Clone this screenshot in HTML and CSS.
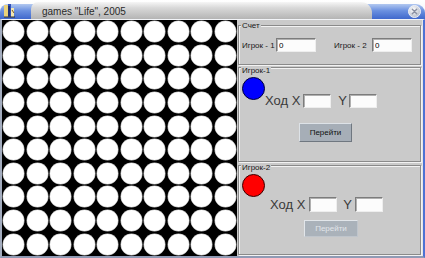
FILE: index.html
```html
<!DOCTYPE html>
<html lang="ru">
<head>
<meta charset="utf-8">
<title>games "Life", 2005</title>
<link rel="stylesheet" href="styles.css">
</head>
<body>
<div class="window">
  <div class="titlebar">
    <div class="bluebar">
      <div class="tb-left">
        <svg class="app-icon" width="13" height="15" viewBox="0 0 13 15">
          <rect x="1" y="2" width="4" height="12" fill="#e9d27a"/>
          <rect x="5" y="1" width="3" height="13" fill="#2f4fb8"/>
          <rect x="8" y="5" width="3" height="9" fill="#f3e7b0"/>
          <path d="M6 3 L6 13" stroke="#101840" stroke-width="1"/>
          <path d="M1 14 L12 14" stroke="#303030" stroke-width="1"/>
          <path d="M9 7 L11 10" stroke="#7a5a20" stroke-width="1"/>
        </svg>
      </div>
      <div class="tb-tab"><span class="title">games "Life", 2005</span></div>
      <div class="tb-right">
        <span class="close">
          <svg width="13" height="13" viewBox="0 0 13 13">
            <defs>
              <radialGradient id="cg" cx="40%" cy="35%" r="65%">
                <stop offset="0" stop-color="#ffffff"/>
                <stop offset="1" stop-color="#b9bfcc"/>
              </radialGradient>
            </defs>
            <circle cx="6.5" cy="6.5" r="6" fill="url(#cg)" stroke="#eef1f7" stroke-width="1"/>
            <path d="M4.3 4.3 L8.7 8.7 M8.7 4.3 L4.3 8.7" stroke="#8a90a2" stroke-width="1.4" stroke-linecap="round"/>
          </svg>
        </span>
      </div>
    </div>
  </div>
  <div class="body">
    <div class="board">
      <span class="cell"></span><span class="cell"></span><span class="cell"></span><span class="cell"></span><span class="cell"></span><span class="cell"></span><span class="cell"></span><span class="cell"></span><span class="cell"></span><span class="cell"></span>
      <span class="cell"></span><span class="cell"></span><span class="cell"></span><span class="cell"></span><span class="cell"></span><span class="cell"></span><span class="cell"></span><span class="cell"></span><span class="cell"></span><span class="cell"></span>
      <span class="cell"></span><span class="cell"></span><span class="cell"></span><span class="cell"></span><span class="cell"></span><span class="cell"></span><span class="cell"></span><span class="cell"></span><span class="cell"></span><span class="cell"></span>
      <span class="cell"></span><span class="cell"></span><span class="cell"></span><span class="cell"></span><span class="cell"></span><span class="cell"></span><span class="cell"></span><span class="cell"></span><span class="cell"></span><span class="cell"></span>
      <span class="cell"></span><span class="cell"></span><span class="cell"></span><span class="cell"></span><span class="cell"></span><span class="cell"></span><span class="cell"></span><span class="cell"></span><span class="cell"></span><span class="cell"></span>
      <span class="cell"></span><span class="cell"></span><span class="cell"></span><span class="cell"></span><span class="cell"></span><span class="cell"></span><span class="cell"></span><span class="cell"></span><span class="cell"></span><span class="cell"></span>
      <span class="cell"></span><span class="cell"></span><span class="cell"></span><span class="cell"></span><span class="cell"></span><span class="cell"></span><span class="cell"></span><span class="cell"></span><span class="cell"></span><span class="cell"></span>
      <span class="cell"></span><span class="cell"></span><span class="cell"></span><span class="cell"></span><span class="cell"></span><span class="cell"></span><span class="cell"></span><span class="cell"></span><span class="cell"></span><span class="cell"></span>
      <span class="cell"></span><span class="cell"></span><span class="cell"></span><span class="cell"></span><span class="cell"></span><span class="cell"></span><span class="cell"></span><span class="cell"></span><span class="cell"></span><span class="cell"></span>
      <span class="cell"></span><span class="cell"></span><span class="cell"></span><span class="cell"></span><span class="cell"></span><span class="cell"></span><span class="cell"></span><span class="cell"></span><span class="cell"></span><span class="cell"></span>
    </div>
    <div class="panel">
      <div class="group g-score">
        <div class="gl">Счет</div>
        <div class="score-row">
          <span class="lbl lbl1">Игрок - 1</span>
          <input class="inp inp-score" type="text" value="0">
          <span class="lbl lbl2">Игрок - 2</span>
          <input class="inp inp-score" type="text" value="0">
        </div>
      </div>
      <div class="group g-p1">
        <div class="gl">Игрок-1</div>
        <div class="player-row">
          <span class="chip chip-blue"></span>
          <div class="move move1">
            <span class="mv-label">Ход X</span>
            <input class="inp inp-move" type="text" value="">
            <span class="mv-label mv-y">Y</span>
            <input class="inp inp-move inp-y" type="text" value="">
          </div>
        </div>
        <button class="btn btn1" type="button">Перейти</button>
      </div>
      <div class="group g-p2">
        <div class="gl">Игрок-2</div>
        <span class="chip chip-red"></span>
        <div class="move move2">
          <span class="mv-label">Ход X</span>
          <input class="inp inp-move" type="text" value="">
          <span class="mv-label mv-y">Y</span>
          <input class="inp inp-move inp-y" type="text" value="">
        </div>
        <button class="btn btn2" type="button" disabled>Перейти</button>
      </div>
    </div>
  </div>
</div>
</body>
</html>
```

FILE: styles.css
```css
* { box-sizing: border-box; }
html, body { margin: 0; padding: 0; }
body {
  width: 425px;
  height: 258px;
  overflow: hidden;
  background: #ffffff;
  font-family: "Liberation Sans", Arial, sans-serif;
}
.window {
  width: 425px;
  height: 258px;
  display: flex;
  flex-direction: column;
}

/* ---- title bar ---- */
.titlebar {
  height: 19px;
  flex: none;
  padding-top: 4px;
  background: linear-gradient(#ffffff, #eef1f6);
}
.bluebar {
  height: 15px;
  display: flex;
  align-items: flex-end;
  border-radius: 8px 9px 0 0;
  background: linear-gradient(#b2c8f0, #6a90e0 45%, #3f68cc);
}
.tb-left {
  width: 31px;
  height: 15px;
  flex: none;
  display: flex;
  align-items: flex-end;
  padding-left: 3px;
}
.app-icon { display: block; margin-bottom: 1px; }
.tb-tab {
  flex: 1;
  height: 17px;
  border-radius: 7px 11px 0 0;
  background: linear-gradient(#f6f6f6, #d8d8d8 35%, #c2c2c2 75%, #b4b4b4);
  padding-left: 11px;
  font-size: 10px;
  line-height: 20px;
  color: #2a2a2a;
  white-space: nowrap;
  overflow: hidden;
}
.tb-right {
  width: 53px;
  height: 15px;
  flex: none;
  display: flex;
  justify-content: flex-end;
  align-items: center;
  padding-right: 4px;
}
.close { display: block; width: 13px; height: 13px; }
.close svg { display: block; }

/* ---- body ---- */
.body {
  flex: 1;
  display: flex;
  border-top: 1px solid #f2f4f8;
  border-left: 2px solid #a3acbe;
  border-bottom: 2px solid #8f9ab4;
  border-right: 2px solid #4d72d4;
}
.board {
  width: 235px;
  flex: none;
  background: #000;
  display: grid;
  grid-template-columns: repeat(10, 1fr);
  grid-template-rows: repeat(10, 1fr);
  place-items: center;
}
.cell {
  width: 21px;
  height: 21px;
  border-radius: 50%;
  background: #ffffff;
  box-shadow: 0 0 0 0.5px #bdbdbd;
}

/* ---- panel ---- */
.panel {
  flex: 1;
  display: flex;
  flex-direction: column;
  padding-top: 5px;
  background: #cacaca;
  border-right: 1px solid #e4e4e4;
}
.group {
  margin: 0 1px;
  border: 1px solid #8a8a8a;
  box-shadow: inset 1px 1px 0 #f2f2f2, 1px 1px 0 #f2f2f2;
}
.g-score { height: 40px; }
.g-p1 { height: 95px; margin-top: 2px; }
.g-p2 { flex: 1; margin-top: 3px; margin-bottom: 1px; }

.gl {
  width: fit-content;
  margin-left: 2px;
  padding: 0 1px;
  background: #cacaca;
  font-size: 8px;
  line-height: 10px;
  color: #181818;
}
.g-score .gl { margin-top: -5px; }
.g-p1 .gl { margin-top: -2px; }
.g-p2 .gl { margin-top: -3px; }

.score-row {
  display: flex;
  align-items: center;
  margin-top: 7px;
  padding-left: 3px;
}
.lbl {
  font-size: 8px;
  color: #181818;
  white-space: nowrap;
}
.lbl1 { width: 34px; }
.lbl2 { width: 38px; margin-left: 18px; }

.inp {
  display: block;
  height: 14px;
  margin: 0;
  padding: 0 0 0 2px;
  border: 1px solid;
  border-color: #7c7c7c #eeeeee #eeeeee #7c7c7c;
  box-shadow: inset 1px 1px 0 #b0b0b0;
  background: #fcfcfc;
  font-family: "Liberation Sans", Arial, sans-serif;
  font-size: 8px;
  color: #000;
  outline: none;
  border-radius: 0;
  appearance: none;
}
.inp-score { width: 40px; }
.inp-move { width: 28px; }

.player-row {
  display: flex;
  align-items: flex-start;
  margin-top: 1px;
  padding-left: 3px;
}
.chip {
  display: block;
  width: 23px;
  height: 23px;
  flex: none;
  border-radius: 50%;
}
.chip-blue { background: #0000ff; border: 1px solid #00003a; }
.chip-red { background: #ff0000; border: 1px solid #3a0000; margin: 1px 0 0 3px; }

.move {
  display: flex;
  align-items: center;
}
.move1 { margin-top: 17px; }
.move1 .inp { margin-left: 3px; }
.move1 .mv-y { margin-left: 7px; }
.move1 .inp-y { margin-left: 2px; }

.move2 { margin-left: 31px; }
.move2 .inp { height: 15px; margin-left: 4px; }
.move2 .mv-y { margin-left: 6px; }
.move2 .inp-y { margin-left: 3px; }

.mv-label {
  font-size: 13px;
  line-height: 14px;
  color: #3a3a3a;
  white-space: nowrap;
}

.btn {
  display: block;
  margin: 0;
  padding: 0;
  font-family: "Liberation Sans", Arial, sans-serif;
  font-size: 8px;
  border: 1px solid;
  border-radius: 0;
  appearance: none;
}
.btn1 {
  width: 53px;
  height: 19px;
  margin: 15px 0 0 60px;
  background: #a6aeb7;
  border-color: #dde2e7 #6f7780 #6f7780 #dde2e7;
  color: #101010;
}
.btn2 {
  width: 54px;
  height: 17px;
  margin: 8px 0 0 65px;
  background: #aab2ba;
  border-color: #e2e6ea #bfc5cc #bfc5cc #e2e6ea;
  color: #e2e6ea;
}
```
